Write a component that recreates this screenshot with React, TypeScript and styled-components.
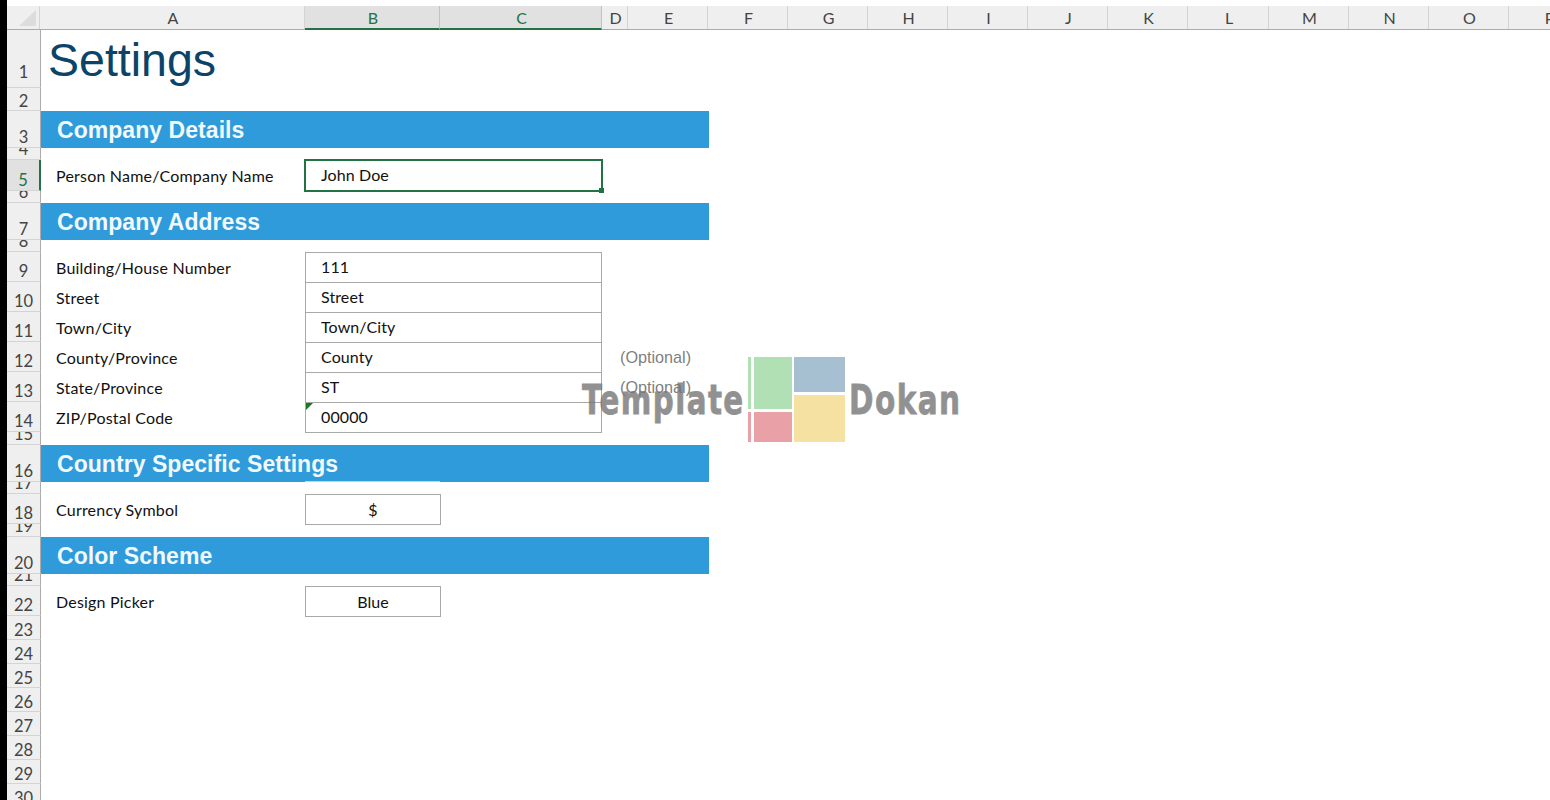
import React from "react";
import styled, { createGlobalStyle } from "styled-components";

const GlobalStyle = createGlobalStyle`
  html, body {
    margin: 0;
    padding: 0;
    background: #fff;
  }
`;

const Page = styled.div`
  position: relative;
  display: flex;
  width: 1550px;
  height: 800px;
  overflow: hidden;
  background: #fff;
  font-family: Lato, "Open Sans", sans-serif;
`;

const BlackEdge = styled.div`
  flex: 0 0 7px;
  background: #000;
`;

const Sheet = styled.div`
  flex: 1;
  padding-top: 6px;
  min-width: 0;
`;

const ColumnBar = styled.div`
  display: flex;
  height: 24px;
  box-sizing: border-box;
  background: #efefef;
  border-bottom: 1px solid #ababab;
`;

const Corner = styled.div`
  flex: 0 0 33px;
  box-sizing: border-box;
  position: relative;
  border-right: 1px solid #d4d4d4;
  &::after {
    content: "";
    position: absolute;
    right: 3px;
    bottom: 3px;
    border-style: solid;
    border-width: 0 0 16px 17px;
    border-color: transparent transparent #dcdcdc transparent;
  }
`;

const ColumnHead = styled.div<{ $w: number; $active?: boolean }>`
  flex: 0 0 ${(p) => p.$w}px;
  box-sizing: border-box;
  height: ${(p) => (p.$active ? "24px" : "23px")};
  display: flex;
  align-items: center;
  justify-content: center;
  padding-left: 2px;
  font-size: 16px;
  color: ${(p) => (p.$active ? "#217346" : "#444")};
  background: ${(p) => (p.$active ? "#e1e1e1" : "transparent")};
  border-right: 1px solid ${(p) => (p.$active ? "#c2c2c2" : "#d4d4d4")};
  border-bottom: ${(p) => (p.$active ? "2px solid #217346" : "none")};
`;

const Row = styled.div<{ $h: number }>`
  display: flex;
  height: ${(p) => p.$h}px;
`;

const RowHead = styled.div<{ $active?: boolean; $pad?: number }>`
  flex: 0 0 34px;
  box-sizing: border-box;
  display: flex;
  align-items: flex-end;
  justify-content: center;
  overflow: hidden;
  padding-bottom: ${(p) => p.$pad ?? 2}px;
  line-height: 16px;
  font-size: 16.5px;
  color: ${(p) => (p.$active ? "#217346" : "#444")};
  background: ${(p) => (p.$active ? "#e1e1e1" : "#efefef")};
  border-right: ${(p) => (p.$active ? "2px solid #217346" : "1px solid #ababab")};
  border-bottom: 1px solid #d4d4d4;
`;

const RowBody = styled.div`
  flex: 1;
  display: flex;
  align-items: stretch;
  min-width: 0;
`;

const Title = styled.h1`
  margin: 0 0 0 7px;
  font-family: "Liberation Sans", Arial, sans-serif;
  font-size: 46.5px;
  font-weight: 400;
  line-height: 61px;
  color: #0b4468;
`;

const SectionBar = styled.div`
  width: 668px;
  box-sizing: border-box;
  padding: 1px 0 0 16px;
  display: flex;
  align-items: center;
  background: #2f9bdb;
  color: #f2f9fd;
  font-family: "Liberation Sans", Arial, sans-serif;
  font-size: 23px;
  font-weight: 700;
  letter-spacing: 0.05px;
`;

const Label = styled.div<{ $lift?: boolean }>`
  flex: 0 0 264px;
  box-sizing: border-box;
  padding: ${(p) => (p.$lift ? 0 : 1)}px 0 ${(p) => (p.$lift ? 1 : 0)}px 15px;
  display: flex;
  align-items: center;
  font-size: 16px;
  letter-spacing: 0.2px;
  color: #111;
`;

const ValueCell = styled.div<{ $w: number; $center?: boolean; $flag?: boolean }>`
  position: relative;
  flex: 0 0 ${(p) => p.$w}px;
  box-sizing: border-box;
  margin-bottom: -1px;
  padding: ${(p) => (p.$center ? "0 0 1px" : "0 15px 3px")};
  display: flex;
  align-items: center;
  justify-content: ${(p) => (p.$center ? "center" : "flex-start")};
  font-size: 16px;
  letter-spacing: 0.1px;
  color: #111;
  background: #fff;
  border: 1px solid #a9a9a9;
  &::before {
    content: "";
    display: ${(p) => (p.$flag ? "block" : "none")};
    position: absolute;
    left: 0;
    top: 0;
    border-style: solid;
    border-width: 7px 7px 0 0;
    border-color: #1a7a1a transparent transparent transparent;
  }
`;

const SelectedCell = styled(ValueCell)`
  margin: -1px 0 -1px -1px;
  border: 2px solid #217346;
  padding-left: 15px;
  &::after {
    content: "";
    position: absolute;
    right: -3px;
    bottom: -3px;
    width: 5px;
    height: 5px;
    background: #217346;
  }
`;

const HintLine = styled.div`
  flex: 0 0 135px;
  height: 1px;
  margin-top: -1px;
  background: #bcd9ec;
`;

const Note = styled.div`
  margin-left: 18px;
  display: flex;
  align-items: center;
  font-family: "Liberation Sans", Arial, sans-serif;
  font-size: 16.2px;
  color: #7f7f7f;
`;

const Watermark = styled.div`
  position: absolute;
  left: 582px;
  top: 357px;
  height: 85px;
  display: flex;
  align-items: center;
  gap: 4px;
  pointer-events: none;
`;

const WatermarkWord = styled.span<{ $w: number; $squeeze: number }>`
  display: inline-block;
  width: ${(p) => p.$w}px;
  padding-top: 2px;
  white-space: nowrap;
  transform: scaleX(${(p) => p.$squeeze});
  transform-origin: left center;
  font-family: "DejaVu Sans", sans-serif;
  font-size: 41px;
  font-weight: 700;
  letter-spacing: 2px;
  line-height: 1;
  color: #737373;
  opacity: 0.78;
  -webkit-text-stroke: 0.8px #737373;
`;

const columns: [string, number, boolean?][] = [
  ["A", 265],
  ["B", 135, true],
  ["C", 162, true],
  ["D", 26],
  ["E", 80],
  ["F", 80],
  ["G", 80],
  ["H", 80],
  ["I", 80],
  ["J", 80],
  ["K", 80],
  ["L", 81],
  ["M", 80],
  ["N", 80],
  ["O", 80],
  ["P", 80],
];

const Logo = () => (
  <svg width="97" height="85" viewBox="0 0 97 85" aria-hidden="true">
    <rect x="0" y="0" width="3" height="52" fill="#b0e0b4" />
    <rect x="6" y="0" width="38" height="52" fill="#b0e0b4" />
    <rect x="46" y="0" width="51" height="35" fill="#a6bfd1" />
    <rect x="46" y="38" width="51" height="47" fill="#f5e2a2" />
    <rect x="0" y="55" width="3" height="30" fill="#e9a0a6" />
    <rect x="6" y="55" width="38" height="30" fill="#e9a0a6" />
  </svg>
);

const addressRows = [
  { n: 9, label: "Building/House Number", value: "111" },
  { n: 10, label: "Street", value: "Street" },
  { n: 11, label: "Town/City", value: "Town/City" },
  { n: 12, label: "County/Province", value: "County", note: true },
  { n: 13, label: "State/Province", value: "ST", note: true },
  { n: 14, label: "ZIP/Postal Code", value: "00000", flag: true },
];

const App: React.FC = () => {
  return (
    <Page>
      <GlobalStyle />
      <BlackEdge />
      <Sheet>
        <ColumnBar>
          <Corner />
          {columns.map(([name, w, active]) => (
            <ColumnHead key={name} $w={w} $active={active}>
              {name}
            </ColumnHead>
          ))}
        </ColumnBar>

        <Row $h={58}>
          <RowHead $pad={7}>1</RowHead>
          <RowBody>
            <Title>Settings</Title>
          </RowBody>
        </Row>
        <Row $h={23}>
          <RowHead $pad={1}>2</RowHead>
        </Row>

        <Row $h={37}>
          <RowHead>3</RowHead>
          <RowBody>
            <SectionBar>Company Details</SectionBar>
          </RowBody>
        </Row>
        <Row $h={12}>
          <RowHead>4</RowHead>
        </Row>
        <Row $h={31}>
          <RowHead $active>5</RowHead>
          <RowBody>
            <Label $lift>Person Name/Company Name</Label>
            <SelectedCell $w={299}>John Doe</SelectedCell>
          </RowBody>
        </Row>
        <Row $h={12}>
          <RowHead>6</RowHead>
        </Row>

        <Row $h={37}>
          <RowHead>7</RowHead>
          <RowBody>
            <SectionBar>Company Address</SectionBar>
          </RowBody>
        </Row>
        <Row $h={12}>
          <RowHead>8</RowHead>
        </Row>
        {addressRows.map((r) => (
          <Row key={r.n} $h={30}>
            <RowHead>{r.n}</RowHead>
            <RowBody>
              <Label>{r.label}</Label>
              <ValueCell $w={297} $flag={r.flag}>
                {r.value}
              </ValueCell>
              {r.note && <Note>(Optional)</Note>}
            </RowBody>
          </Row>
        ))}
        <Row $h={13}>
          <RowHead>15</RowHead>
        </Row>

        <Row $h={37}>
          <RowHead>16</RowHead>
          <RowBody>
            <SectionBar>Country Specific Settings</SectionBar>
          </RowBody>
        </Row>
        <Row $h={12}>
          <RowHead>17</RowHead>
          <RowBody>
            <Label />
            <HintLine />
          </RowBody>
        </Row>
        <Row $h={30}>
          <RowHead>18</RowHead>
          <RowBody>
            <Label>Currency Symbol</Label>
            <ValueCell $w={136} $center>
              $
            </ValueCell>
          </RowBody>
        </Row>
        <Row $h={13}>
          <RowHead>19</RowHead>
        </Row>

        <Row $h={37}>
          <RowHead>20</RowHead>
          <RowBody>
            <SectionBar>Color Scheme</SectionBar>
          </RowBody>
        </Row>
        <Row $h={12}>
          <RowHead>21</RowHead>
        </Row>
        <Row $h={30}>
          <RowHead>22</RowHead>
          <RowBody>
            <Label>Design Picker</Label>
            <ValueCell $w={136} $center>
              Blue
            </ValueCell>
          </RowBody>
        </Row>

        {[23, 24, 25, 26, 27, 28, 29, 30].map((n) => (
          <Row key={n} $h={24}>
            <RowHead $pad={1}>{n}</RowHead>
          </Row>
        ))}
      </Sheet>

      <Watermark>
        <WatermarkWord $w={162} $squeeze={0.715}>
          Template
        </WatermarkWord>
        <Logo />
        <WatermarkWord $w={112} $squeeze={0.72}>
          Dokan
        </WatermarkWord>
      </Watermark>
    </Page>
  );
};

export default App;
